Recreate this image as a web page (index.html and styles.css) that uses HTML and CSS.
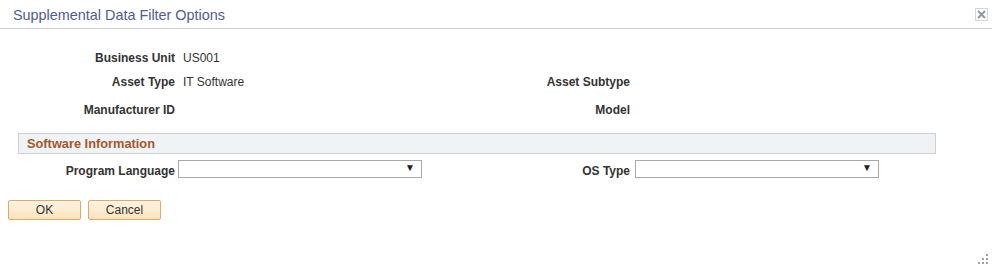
FILE: index.html
```html
<!DOCTYPE html>
<html lang="en">
<head>
    <meta charset="UTF-8">
    <title>Supplemental Data Filter Options</title>
    <link rel="stylesheet" href="styles.css">
</head>
<body>
    <div id="dialog">
        <div class="dlg-header">
            <span class="dlg-title">Supplemental Data Filter Options</span>
            <span class="dlg-close" title="Close">
                <svg width="9" height="9" viewBox="0 0 9 9"><path d="M1 1L8 8M8 1L1 8" stroke="#8a9aa8" stroke-width="2"/></svg>
            </span>
        </div>

        <div class="fields">
            <span class="lbl">Business Unit</span>
            <span class="val">US001</span>
            <span></span>
            <span></span>

            <span class="lbl">Asset Type</span>
            <span class="val">IT Software</span>
            <span class="lbl">Asset Subtype</span>
            <span class="val"></span>

            <span class="lbl tall">Manufacturer ID</span>
            <span class="val tall"></span>
            <span class="lbl tall">Model</span>
            <span class="val tall"></span>
        </div>

        <div class="group-head">Software Information</div>

        <div class="select-row">
            <label class="lbl sel-lbl">Program Language</label>
            <div class="dropdown"><span class="arrow">&#9660;</span></div>
            <label class="lbl sel-lbl os">OS Type</label>
            <div class="dropdown"><span class="arrow">&#9660;</span></div>
        </div>

        <div class="buttons">
            <button class="btn">OK</button>
            <button class="btn">Cancel</button>
        </div>

        <div class="grip">
            <svg width="11" height="11" viewBox="0 0 11 11" fill="#a0a0a0">
                <rect x="8" y="0" width="2" height="2"/>
                <rect x="4" y="4" width="2" height="2"/>
                <rect x="8" y="4" width="2" height="2"/>
                <rect x="0" y="8" width="2" height="2"/>
                <rect x="4" y="8" width="2" height="2"/>
                <rect x="8" y="8" width="2" height="2"/>
            </svg>
        </div>
    </div>
</body>
</html>
```

FILE: styles.css
```css
body {
    margin: 0;
    font-family: "Liberation Sans", Arial, sans-serif;
    background-color: #fff;
    color: #333;
}

#dialog {
    position: relative;
    height: 265px;
}

.dlg-header {
    display: flex;
    justify-content: space-between;
    align-items: center;
    height: 28px;
    border-bottom: 1px solid #cbcfd6;
    padding: 0 4px 0 13px;
}

.dlg-title {
    font-size: 14.4px;
    color: #4f5b93;
    margin-top: 1px;
}

.dlg-close {
    display: flex;
    justify-content: center;
    align-items: center;
    width: 11px;
    height: 11px;
    border: 1px solid #d3d7dc;
    margin-top: 1px;
}

.fields {
    display: grid;
    grid-template-columns: 175px 264px 175px 1fr;
    column-gap: 8px;
    padding-top: 17px;
}

.lbl {
    text-align: right;
    font-size: 12px;
    font-weight: bold;
    color: #333;
}

.val {
    font-size: 12px;
    color: #333;
}

.fields span {
    height: 24px;
    line-height: 24px;
}

.fields span.tall {
    height: 32px;
    line-height: 32px;
}

.group-head {
    margin: 7px 56px 0 18px;
    height: 19px;
    line-height: 19px;
    padding-left: 8px;
    background-color: #eff3f5;
    border: 1px solid #ccd1d6;
    font-size: 12.8px;
    font-weight: bold;
    color: #a3582b;
}

.select-row {
    display: flex;
    align-items: flex-end;
    margin-top: 6px;
    height: 18px;
}

.sel-lbl {
    width: 175px;
    margin-right: 3px;
    line-height: 14px;
}

.sel-lbl.os {
    width: 155px;
    margin-left: 53px;
    margin-right: 5px;
}

.dropdown {
    position: relative;
    box-sizing: border-box;
    width: 244px;
    height: 18px;
    border: 1px solid #a9a9a9;
    background-color: #fff;
}

.arrow {
    position: absolute;
    right: 6px;
    top: 1px;
    font-size: 10px;
    color: #222;
}

.buttons {
    display: flex;
    gap: 7px;
    padding: 22px 0 0 8px;
}

.btn {
    box-sizing: border-box;
    width: 73px;
    height: 20px;
    padding: 0;
    font-family: "Liberation Sans", Arial, sans-serif;
    font-size: 12px;
    color: #333;
    background: linear-gradient(#fdf4e3, #fbe3bd);
    border: 1px solid #e3a766;
    border-radius: 2px;
    cursor: pointer;
}

.grip {
    position: absolute;
    right: 3px;
    bottom: 3px;
    width: 11px;
    height: 11px;
}
```
